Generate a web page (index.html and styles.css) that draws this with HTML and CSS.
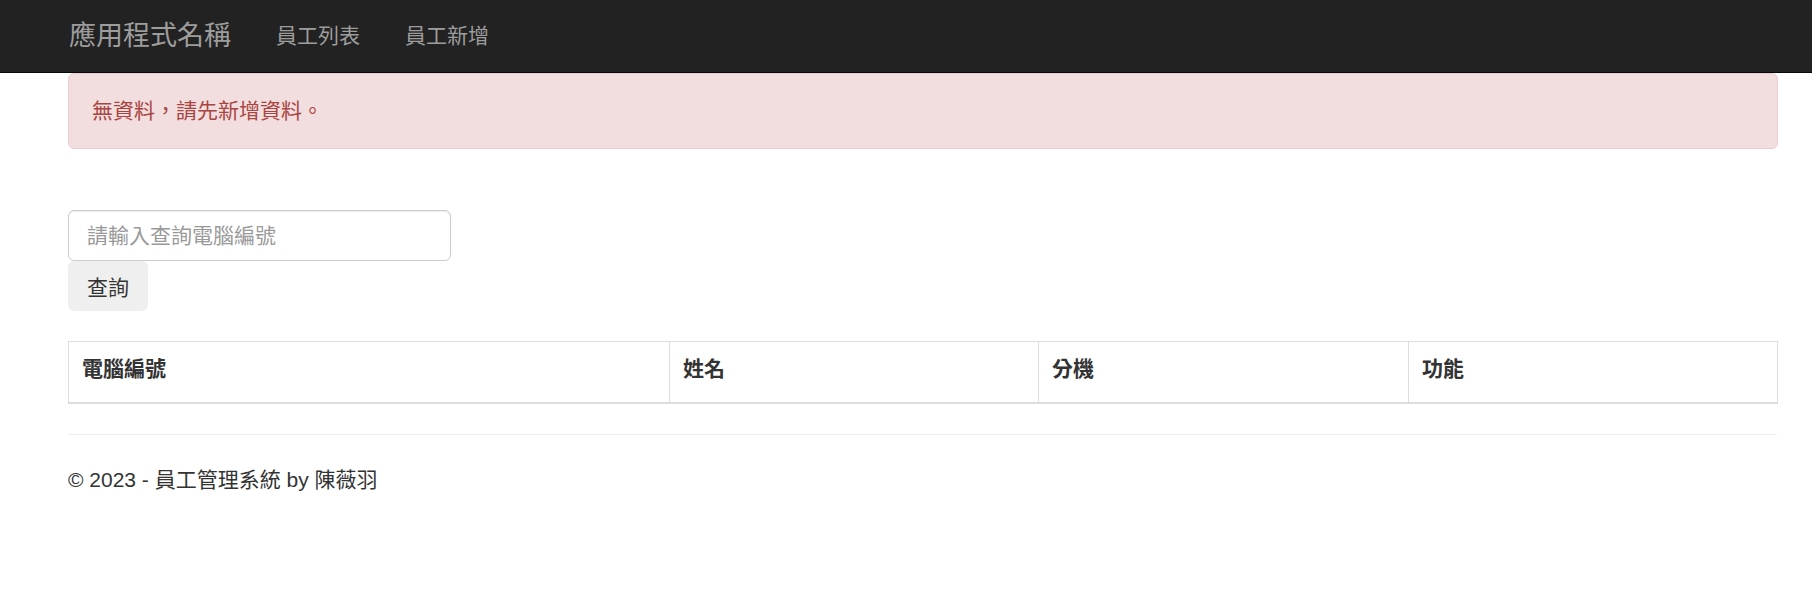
FILE: index.html
```html
<!DOCTYPE html>
<html lang="zh-Hant">
<head>
<meta charset="utf-8">
<title>員工列表</title>
<link rel="stylesheet" href="styles.css">
</head>
<body>
<nav class="navbar">
  <div class="container nav-inner">
    <a class="brand" href="#">應用程式名稱</a>
    <a class="nav-link" href="#">員工列表</a>
    <a class="nav-link" href="#">員工新增</a>
  </div>
</nav>
<main class="container">
  <div class="alert">無資料，請先新增資料。</div>
  <form class="search">
    <input class="search-input" type="text" placeholder="請輸入查詢電腦編號">
    <button class="search-btn" type="button">查詢</button>
  </form>
  <table class="grid">
    <colgroup>
      <col class="c1"><col class="c2"><col class="c3"><col class="c4">
    </colgroup>
    <thead>
      <tr><th>電腦編號</th><th>姓名</th><th>分機</th><th>功能</th></tr>
    </thead>
    <tbody></tbody>
  </table>
  <hr class="rule">
  <footer class="footer">© 2023 - 員工管理系統 by 陳薇羽</footer>
</main>
</body>
</html>
```

FILE: styles.css
```css
html, body {
  margin: 0;
  padding: 0;
  background: #fff;
}
body {
  font-family: "Liberation Sans", "Noto Sans CJK TC", sans-serif;
  font-size: 21px;
  line-height: 30px;
  color: #333;
}
.container {
  margin: 0 34px 0 68px;
}
.navbar {
  background: #222;
  border-bottom: 1px solid #080808;
  height: 72px;
}
.nav-inner {
  height: 72px;
  display: flex;
  align-items: center;
  gap: 45px;
}
.brand {
  font-size: 27px;
  line-height: 30px;
  color: #9d9d9d;
  text-decoration: none;
  padding-left: 1px;
}
.nav-link {
  font-size: 21px;
  line-height: 30px;
  color: #9d9d9d;
  text-decoration: none;
}
.alert {
  background: #f2dede;
  border: 1px solid #ebccd1;
  border-radius: 6px;
  color: #a94442;
  padding: 22px 23px;
  line-height: 30px;
}
.search {
  margin-top: 61px;
  display: flex;
  flex-direction: column;
  align-items: flex-start;
}
.search-input {
  box-sizing: border-box;
  width: 383px;
  height: 51px;
  margin: 0;
  border: 1px solid #ccc;
  border-radius: 6px;
  padding: 0 18px;
  font-family: inherit;
  font-size: 21px;
  color: #555;
  box-shadow: inset 0 1px 1px rgba(0,0,0,.075);
  outline: none;
}
.search-input::placeholder {
  color: #999;
}
.search-btn {
  box-sizing: border-box;
  width: 80px;
  height: 50px;
  margin: 0;
  border: 0;
  border-radius: 6px;
  background: #efefef;
  font-family: inherit;
  font-size: 21px;
  color: #333;
  padding: 0;
}
.grid {
  margin-top: 30px;
  margin-bottom: 30px;
  width: 1709px;
  border-collapse: collapse;
  table-layout: fixed;
}
.c1 { width: 601px; }
.c2 { width: 369px; }
.c3 { width: 370px; }
.c4 { width: 369px; }
.grid th {
  border: 1px solid #ddd;
  border-bottom-width: 2px;
  text-align: left;
  font-weight: 700;
  padding: 12px 13px 18px;
  line-height: 30px;
  vertical-align: top;
}
.rule {
  margin: 0;
  border: 0;
  border-top: 1px solid #eee;
  width: 1709px;
}
.footer {
  margin-top: 30px;
  line-height: 30px;
}
```
